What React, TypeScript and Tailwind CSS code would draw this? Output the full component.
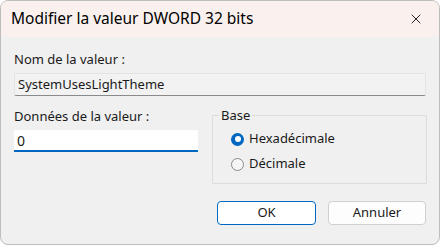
import { X } from 'lucide-react';

function Radio({ checked, label }: { checked: boolean; label: string }) {
    return (
        <div className="flex items-center gap-[5px] h-[24px]">
            {checked ? (
                <span className="w-[13px] h-[13px] rounded-full bg-[#0067c0] flex items-center justify-center">
                    <span className="w-[6px] h-[6px] rounded-full bg-white" />
                </span>
            ) : (
                <span className="w-[13px] h-[13px] rounded-full border border-[#8a8a8a] bg-[#f6f6f6]" />
            )}
            <span>{label}</span>
        </div>
    );
}

export default function App() {
    return (
        <div
            className="w-[440px] h-[245px] bg-white text-[13px] text-[#1a1a1a]"
            style={{ fontFamily: '"Noto Sans", "Liberation Sans", sans-serif' }}
        >
            <div className="w-full h-full rounded-[8px] border border-[#bdbdbd] bg-[#f0f0f0] overflow-hidden flex flex-col">
                {/* Title bar */}
                <div className="h-[36px] bg-[#faf1ee] flex items-center justify-between pl-[10px] pr-[15px]">
                    <span className="text-[15.5px] text-black">Modifier la valeur DWORD 32 bits</span>
                    <X className="w-[16px] h-[16px] text-black" strokeWidth={1.3} />
                </div>

                <div className="flex flex-col px-[13px] pt-[12px]">
                    <div className="h-[20px] leading-[20px]">Nom de la valeur :</div>
                    <div className="mt-[4px] h-[23px] border border-[#e3e3e3] border-b-[#8a8a8a] rounded-[2px] bg-[#f2f2f2] flex items-center pl-[3px]">
                        SystemUsesLightTheme
                    </div>

                    <div className="flex gap-[14px]">
                        <div className="w-[184px] flex flex-col">
                            <div className="mt-[10px] h-[20px] leading-[20px]">Données de la valeur :</div>
                            <div className="mt-[4px] h-[22px] bg-white border-b-2 border-[#0067c0] flex items-center pl-[3px] text-[14px]">
                                0
                            </div>
                        </div>
                        <div className="relative flex-1 -mr-[1px] mt-[19px] h-[69px] border border-[#dcdcdc] rounded-[1px] pl-[18px] pt-[11px] flex flex-col gap-[1px]">
                            <span className="absolute -top-[10px] left-[6px] px-[2px] bg-[#f0f0f0] leading-[18px]">Base</span>
                            <Radio checked label="Hexadécimale" />
                            <Radio checked={false} label="Décimale" />
                        </div>
                    </div>

                    <div className="mt-[17px] flex justify-end gap-[12px]">
                        <button className="w-[99px] h-[24px] bg-white border border-[#0067c0] rounded-[4px]">OK</button>
                        <button className="w-[98px] h-[24px] bg-[#fdfdfd] border border-[#d0d0d0] rounded-[4px]">Annuler</button>
                    </div>
                </div>
            </div>
        </div>
    );
}
